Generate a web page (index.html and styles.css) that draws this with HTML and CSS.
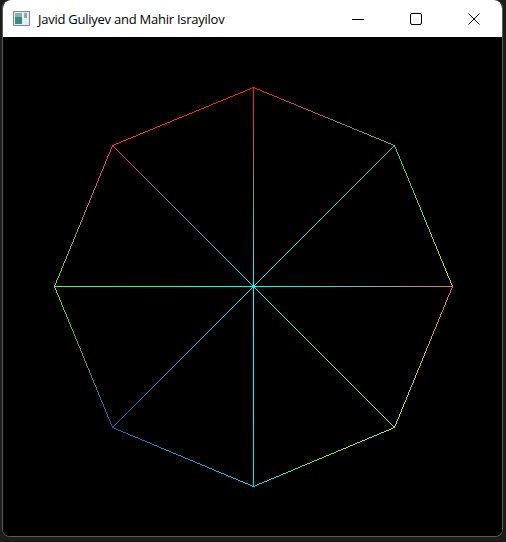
FILE: index.html
```html
<!DOCTYPE html>
<html>
<head>
<meta charset="utf-8">
<link rel="stylesheet" href="styles.css">
</head>
<body>
<div class="window">
  <div class="titlebar">
    <svg class="appicon" width="17" height="15" viewBox="0 0 17 15">
      <rect x="0.5" y="0.5" width="16" height="14" fill="#e8ecef" stroke="#7a8a94"/>
      <rect x="2" y="2" width="7" height="11" fill="#3a8a86"/>
      <rect x="2" y="2" width="7" height="4" fill="#7cb7b0"/>
      <rect x="11" y="2" width="3" height="5" fill="#9aa4aa"/>
    </svg>
    <span class="title">Javid Guliyev and Mahir Israyilov</span>
    <div class="controls">
      <div class="btn"><svg width="12" height="12" viewBox="0 0 12 12"><line x1="0" y1="6.5" x2="12" y2="6.5" stroke="#000" stroke-width="1"/></svg></div>
      <div class="btn"><svg width="12" height="12" viewBox="0 0 12 12"><rect x="0.5" y="0.5" width="11" height="11" rx="1.5" fill="none" stroke="#000" stroke-width="1"/></svg></div>
      <div class="btn"><svg width="12" height="12" viewBox="0 0 12 12"><path d="M0.5 0.5 L11.5 11.5 M11.5 0.5 L0.5 11.5" stroke="#000" stroke-width="1"/></svg></div>
    </div>
  </div>
  <div class="canvas">
    <canvas id="gl" class="gl" width="500" height="498"></canvas>
  </div>
</div>
<script src="script.js"></script>
</body>
</html>
```

FILE: styles.css
```css
html, body {
  margin: 0;
  padding: 0;
}
body {
  width: 506px;
  height: 542px;
  background: #1c1c1c;
  overflow: hidden;
  padding: 0 0 0 2px;
  box-sizing: border-box;
}
.window {
  width: 501px;
  height: 537px;
  box-sizing: border-box;
  border: 1px solid #5a5a5a;
  border-top: none;
  border-radius: 8px;
  overflow: hidden;
  background: #000;
  display: flex;
  flex-direction: column;
}
.titlebar {
  height: 37px;
  flex: none;
  background: #fff;
  display: flex;
  align-items: center;
  padding-left: 10px;
  border-radius: 8px 8px 0 0;
}
.appicon {
  flex: none;
}
.title {
  margin-left: 8px;
  font-family: "Open Sans", "Noto Sans", sans-serif;
  font-size: 13px;
  letter-spacing: -0.25px;
  color: #000;
  white-space: nowrap;
  flex: 1;
  margin-top: 0;
}
.controls {
  display: flex;
  height: 100%;
  margin-right: -1px;
}
.btn {
  width: 58px;
  height: 100%;
  display: flex;
  align-items: center;
  justify-content: center;
}
.canvas {
  flex: 1;
  background: #000;
}
.gl {
  display: block;
  background: #000;
}
```

FILE: script.js
```js
(function () {
  var cv = document.getElementById('gl');
  var ctx = cv.getContext('2d');
  var W = cv.width, H = cv.height;
  var img = ctx.createImageData(W, H);
  var d = img.data;
  for (var i = 3; i < d.length; i += 4) d[i] = 255;

  function plot(x, y, c) {
    if (x < 0 || y < 0 || x >= W || y >= H) return;
    var k = (y * W + x) * 4;
    d[k] = c[0]; d[k + 1] = c[1]; d[k + 2] = c[2];
  }
  function line(p0, p1, c0, c1) {
    var dx = p1[0] - p0[0], dy = p1[1] - p0[1];
    var n = Math.max(Math.abs(dx), Math.abs(dy));
    for (var i = 0; i <= n; i++) {
      var t = n ? i / n : 0;
      plot(Math.round(p0[0] + dx * t), Math.round(p0[1] + dy * t), [
        c0[0] + (c1[0] - c0[0]) * t,
        c0[1] + (c1[1] - c0[1]) * t,
        c0[2] + (c1[2] - c0[2]) * t
      ]);
    }
  }

  var C = [250, 249];
  var T = [250, 50], TR = [391, 108], R = [449, 249], BR = [391, 390];
  var B = [250, 449], BL = [109, 390], L = [51, 249], TL = [109, 108];

  var cyan = [0, 255, 255];
  var red = [255, 30, 0];
  var pink = [255, 40, 125];
  var green = [90, 235, 90];
  var blue = [40, 85, 175];
  var cyanB = [0, 225, 255];
  var yellow = [210, 240, 0];
  var rose = [225, 110, 140];
  var teal = [70, 190, 160];
  var lime = [190, 230, 40];

  /* outline */
  line(T, TR, red, teal);
  line(TR, R, teal, lime);
  line(R, BR, rose, yellow);
  line(BR, B, yellow, cyanB);
  line(B, BL, cyanB, blue);
  line(BL, L, blue, green);
  line(L, TL, green, pink);
  line(TL, T, pink, red);

  /* spokes */
  line(C, T, cyan, red);
  line(C, TR, cyan, teal);
  line(C, R, cyan, rose);
  line(C, BR, cyan, yellow);
  line(C, B, cyan, cyanB);
  line(C, BL, cyan, blue);
  line(C, L, cyan, green);
  line(C, TL, cyan, pink);

  ctx.putImageData(img, 0, 0);
})();
```
